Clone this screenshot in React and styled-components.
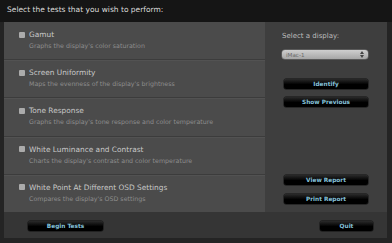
import styled, { createGlobalStyle } from "styled-components";

const tests = [
  { name: "Gamut", desc: "Graphs the display's color saturation" },
  { name: "Screen Uniformity", desc: "Maps the evenness of the display's brightness" },
  { name: "Tone Response", desc: "Graphs the display's tone response and color temperature" },
  { name: "White Luminance and Contrast", desc: "Charts the display's contrast and color temperature" },
  { name: "White Point At Different OSD Settings", desc: "Compares the display's OSD settings" },
];

export default function App() {
  return (
    <Window>
      <Global />
      <Header>Select the tests that you wish to perform:</Header>
      <Frame>
        <Main>
          <TestList>
            {tests.map((t) => (
              <TestRow key={t.name}>
                <TestTitle>
                  <Check />
                  {t.name}
                </TestTitle>
                <TestDesc>{t.desc}</TestDesc>
              </TestRow>
            ))}
          </TestList>
          <Side>
            <SideLabel>Select a display:</SideLabel>
            <Select>
              <span>iMac-1</span>
              <Arrows>
                <svg width="4" height="7" viewBox="0 0 4 7">
                  <path d="M0 3 L2 0 L4 3 Z M0 4 L2 7 L4 4 Z" fill="#444" />
                </svg>
              </Arrows>
            </Select>
            <Button $top={20}>Identify</Button>
            <Button $top={8}>Show Previous</Button>
            <Spacer />
            <Button>View Report</Button>
            <Button $top={9}>Print Report</Button>
          </Side>
        </Main>
        <Footer>
          <Button $width={75}>Begin Tests</Button>
          <Button $width={53}>Quit</Button>
        </Footer>
      </Frame>
    </Window>
  );
}

const Global = createGlobalStyle`
  body {
    margin: 0;
    background: #232323;
  }
`;

const Window = styled.div`
  width: 392px;
  height: 243px;
  background: #242424;
  font-family: "DejaVu Sans", "Lucida Grande", sans-serif;
  display: flex;
  flex-direction: column;
  overflow: hidden;
`;

const Header = styled.div`
  height: 22px;
  background: #151515;
  color: #dcdcdc;
  font-size: 7.5px;
  padding-left: 7px;
  display: flex;
  align-items: center;
  box-sizing: border-box;
  padding-bottom: 3px;
`;

const Frame = styled.div`
  padding: 0 5px 5px 4px;
  display: flex;
  flex-direction: column;
`;

const Main = styled.div`
  display: flex;
  height: 190px;
`;

const TestList = styled.div`
  width: 261px;
  background: #4b4b4b;
  display: flex;
  flex-direction: column;
`;

const TestRow = styled.div`
  flex: 1;
  padding: 8px 0 0 15px;
  border-bottom: 1px solid #3c3c3c;
  box-shadow: inset 0 1px 0 #525252;

  &:first-child {
    box-shadow: none;
  }

  &:last-child {
    border-bottom: none;
  }
`;

const TestTitle = styled.div`
  display: flex;
  align-items: center;
  gap: 4px;
  color: #c9c9c9;
  font-size: 7.4px;
  height: 9px;
`;

const Check = styled.span`
  width: 6px;
  height: 6px;
  background: #ababab;
  border-radius: 1px;
`;

const TestDesc = styled.div`
  margin: 3px 0 0 10px;
  color: #8d8d8d;
  font-size: 6.3px;
`;

const Side = styled.div`
  flex: 1;
  background: #3e3e3e;
  display: flex;
  flex-direction: column;
  padding: 9px 18px 8px 17px;
`;

const SideLabel = styled.div`
  color: #bdbdbd;
  font-size: 7px;
  height: 9px;
  display: flex;
  align-items: center;
`;

const Select = styled.div`
  margin-top: 10px;
  height: 9px;
  width: 86px;
  border-radius: 3px;
  background: linear-gradient(#cfcfcf, #a6a6a6);
  box-shadow: 0 0 0 0.5px #777;
  display: flex;
  align-items: center;
  justify-content: space-between;
  padding: 0 4px;
  box-sizing: border-box;
  color: #6a6a6a;
  font-size: 5.6px;
`;

const Arrows = styled.span`
  display: flex;
`;

const Spacer = styled.div`
  flex: 1;
`;

const Button = styled.div`
  margin-top: ${({ $top }) => ($top ?? 0)}px;
  margin-left: 2px;
  width: ${({ $width }) => $width ?? 84}px;
  height: 10px;
  border-radius: 2px;
  background: linear-gradient(#2a2a2a, #000 55%);
  box-shadow: 0 0 0 0.5px #111;
  color: #86c3dc;
  font-size: 5.8px;
  font-weight: bold;
  display: flex;
  align-items: center;
  justify-content: center;
`;

const Footer = styled.div`
  height: 26px;
  background: #353535;
  display: flex;
  align-items: center;
  justify-content: space-between;
  padding: 1px 14px 0 22px;
  box-sizing: border-box;
`;
